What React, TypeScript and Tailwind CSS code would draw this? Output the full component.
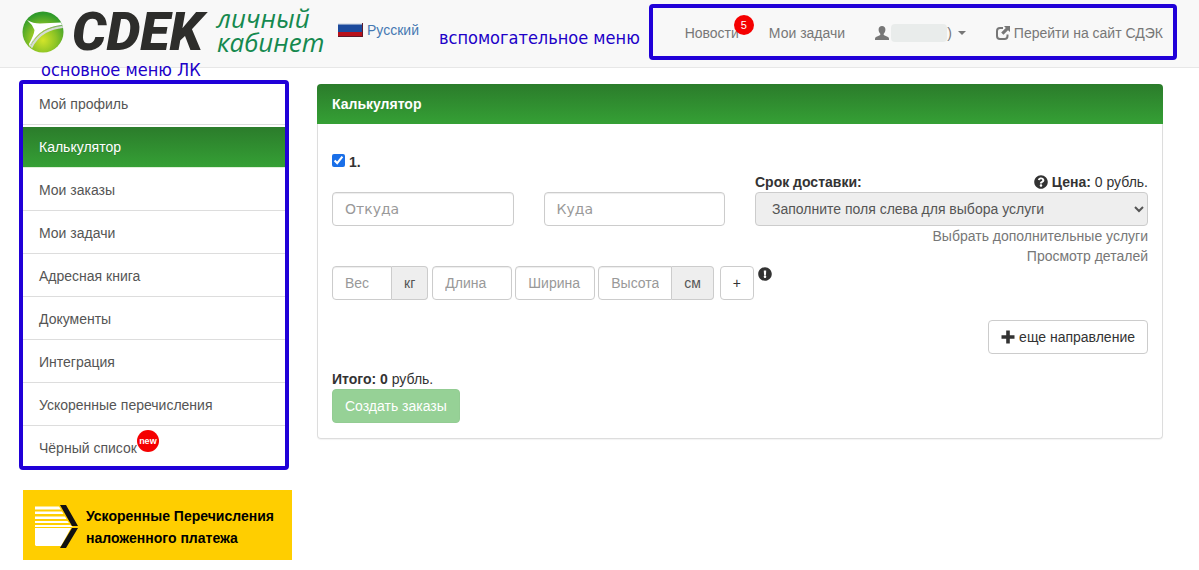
import { useState } from 'react'
import { FaExclamationCircle, FaQuestionCircle } from 'react-icons/fa'

const menuItems = [
  { label: 'Мой профиль' },
  { label: 'Калькулятор', active: true },
  { label: 'Мои заказы' },
  { label: 'Мои задачи' },
  { label: 'Адресная книга' },
  { label: 'Документы' },
  { label: 'Интеграция' },
  { label: 'Ускоренные перечисления' },
  { label: 'Чёрный список', badge: 'new' },
]

const field =
  'h-[34px] min-w-0 border border-[#ccc] bg-white px-3 text-[#555] placeholder:text-[#999] shadow-[inset_0_1px_1px_rgba(0,0,0,0.075)] outline-none focus:border-[#66afe9]'
const addon =
  'flex h-[34px] items-center rounded-r border border-l-0 border-[#ccc] bg-[#eee] px-3 text-[#555]'
const button = 'h-[34px] rounded border border-[#ccc] bg-white px-3 text-[#333]'
const note = "font-['DejaVu_Sans_Condensed','DejaVu_Sans',sans-serif] font-stretch-condensed text-lg leading-5 text-[#2000c8]"

function GlobeLogo() {
  return (
    <svg viewBox="0 0 42 42" className="size-[42px]" aria-hidden="true">
      <defs>
        <radialGradient id="globe" cx="0.5" cy="0.7" r="0.65">
          <stop offset="0" stopColor="#d3e52a" />
          <stop offset="0.5" stopColor="#8dc425" />
          <stop offset="1" stopColor="#2f9a2b" />
        </radialGradient>
      </defs>
      <circle cx="21" cy="21" r="20.5" fill="url(#globe)" />
      <path d="M5 9 Q11 12.500 18 12.500 L39 11.500 L40 14 Q29 15 21.500 19.500 Q13 25 8 36 L7 33 Q12 24 12.500 19 Q10 13 5 9Z" fill="#fff" />
      <path d="M8.500 35.500 Q14 25 22.500 20.200 Q30 16 40.500 14.800 L41 17 Q31 18 24 22 Q15 27 10 37.500Z" fill="#d5dbd5" />
      <path d="M8 34.500 Q13.500 24.500 22 19.800 Q29 15.800 40 14.600" fill="none" stroke="#8fae86" strokeWidth="0.6" />
    </svg>
  )
}

function Flag() {
  return (
    <svg viewBox="0 0 25 14" className="h-3.5 w-[25px]" aria-hidden="true">
      <rect width="25" height="9" fill="#1c4a9c" />
      <rect width="25" height="1.5" fill="#dfe4ea" />
      <rect y="9" width="25" height="5" fill="#b8111b" />
      <path d="M0 13.5H24.5V0" fill="none" stroke="#5d1b2c" strokeWidth="1" />
    </svg>
  )
}

function UserIcon() {
  return (
    <svg viewBox="0 0 14 14" className="size-3.5" fill="currentColor" aria-hidden="true">
      <path d="M7 0C4.900 0 3.600 1.500 3.600 3.500c0 1.600.6 3 1.500 4 .4.500.3 1.500-.3 1.800L1 11C.3 11.400 0 12 0 12.800V14h14v-1.200c0-.8-.3-1.400-1-1.800L9.200 9.300c-.6-.3-.7-1.300-.3-1.800.9-1 1.500-2.400 1.500-4C10.400 1.500 9.100 0 7 0Z" />
    </svg>
  )
}

function ShareIcon() {
  return (
    <svg viewBox="0 0 14 14" className="size-3.5" aria-hidden="true">
      <path d="M7 2H4Q1 2 1 5V10Q1 13 4 13H8.500Q11.500 13 11.500 10V8.500" fill="none" stroke="currentColor" strokeWidth="2" />
      <path d="M8 0H14V6L12 4.200L7.400 8.800L5.200 6.600L9.800 2Z" fill="currentColor" />
    </svg>
  )
}

function PlusIcon() {
  return (
    <svg viewBox="0 0 14 14" className="size-3.5" fill="currentColor" aria-hidden="true">
      <path d="M5.200.5h3.600v4.700h4.700v3.600H8.800v4.700H5.200V8.800H.5V5.200h4.700Z" />
    </svg>
  )
}

function Header() {
  return (
    <header className="flex h-[68px] items-start border-b border-[#e7e7e7] bg-[#f8f8f8] px-[22px]">
      <a href="#" className="flex shrink-0 items-start">
        <span className="mt-[11px]">
          <GlobeLogo />
        </span>
        <span className="mt-1 ml-2 w-[145px] font-[Roboto,sans-serif] text-[54px] leading-[56px] font-black text-[#2d2d2b] italic">
          CDEK
        </span>
        <span className="mt-1.5 w-[121px] font-['Open_Sans',sans-serif] text-[26px] leading-6 text-[#15894f] italic">
          личный кабинет
        </span>
      </a>
      <a href="#" className="mt-5 flex shrink-0 items-center gap-1 leading-5 text-[#4679b2]">
        <Flag />
        Русский
      </a>
      <span className={`${note} mt-7 ml-5 shrink-0`}>вспомогательное меню</span>
      <nav className="mt-1 ml-auto flex h-14 shrink-0 items-center gap-[30px] rounded border-4 border-[#2000d8] pt-0.5 pr-2.5 pl-8 text-[#777]">
        <a href="#" className="relative">
          Новости
          <span className="absolute -top-2 -right-[15px] flex size-5 items-center justify-center rounded-full bg-[#f50000] text-[11px] text-white">
            5
          </span>
        </a>
        <a href="#">Мои задачи</a>
        <button className="flex items-center" aria-label="Профиль">
          <UserIcon />
          <span className="ml-0.5 h-[18px] w-14 rounded-sm bg-[#e9eceb]" />
          <span>)</span>
          <span className="ml-1.5 border-x-4 border-t-4 border-x-transparent border-t-[#777]" />
        </button>
        <a href="#" className="flex items-center gap-1">
          <ShareIcon />
          Перейти на сайт СДЭК
        </a>
      </nav>
    </header>
  )
}

function Sidebar() {
  return (
    <aside className="w-[273px] shrink-0">
      <nav className="relative mr-[3px] rounded border-4 border-[#2000d8]">
        <span className={`${note} absolute -top-6 left-[18px] whitespace-nowrap`}>
          основное меню ЛК
        </span>
        <ul className="flex flex-col gap-0.5">
          {menuItems.map(({ label, active, badge }) => (
            <li key={label}>
              <a
                href="#"
                className={
                  active
                    ? 'block border-b border-[#dff0d8] bg-linear-to-b from-[#2b7c2b] to-[#35a035] px-4 py-2.5 leading-5 text-white text-shadow-2xs'
                    : badge
                      ? 'block px-4 pt-2.5 pb-2 leading-5 text-[#555]'
                      : 'block border-b border-[#ddd] px-4 py-2.5 leading-5 text-[#555]'
                }
              >
                <span className="relative">
                  {label}
                  {badge && (
                    <span className="absolute -top-2.5 left-full flex size-[22px] items-center justify-center rounded-full bg-[#f50000] text-[9px] font-bold text-white">
                      {badge}
                    </span>
                  )}
                </span>
              </a>
            </li>
          ))}
        </ul>
      </nav>
      <a
        href="#"
        className="mt-5 ml-1 flex h-[70px] items-center gap-2 bg-[#ffce00] pt-1 pl-3 leading-[22px] font-bold text-black"
      >
        <svg viewBox="0 0 43 44" className="h-11 w-[43px] shrink-0" aria-hidden="true">
          <path d="M0 1.500H24L26 4.500H0ZM0 6.500H27L28.500 9H0ZM0 11.500H30L31.500 14H0ZM0 16H32.500L34 18H0ZM0 20H35L38 22H0Z" fill="#fff" />
          <path d="M0 23H36L26 41H1L0 40Z" fill="#fff" />
          <path d="M25 0H31L43 21H37ZM43 23H37L25 43H31Z" fill="#111" />
        </svg>
        <span>
          Ускоренные Перечисления
          <br />
          наложенного платежа
        </span>
      </a>
    </aside>
  )
}

function Calculator() {
  const [checked, setChecked] = useState(true)

  return (
    <section className="mt-1 min-w-0 flex-1">
      <h1 className="rounded-t bg-linear-to-b from-[#2b7c2b] to-[#35a035] px-[15px] py-2.5 leading-5 font-bold text-white">
        Калькулятор
      </h1>
      <form className="rounded-b border border-t-0 border-[#ddd] px-3.5 pt-7 pb-[15px] shadow-[0_1px_1px_rgba(0,0,0,0.05)]">
        <label className="flex h-5 items-center gap-1 font-bold">
          <input
            type="checkbox"
            checked={checked}
            onChange={(e) => setChecked(e.target.checked)}
            className="mb-1 size-[13px] accent-[#1a6fe8]"
          />
          1.
        </label>

        <div className="grid grid-cols-4 items-start gap-x-[30px]">
          <input
            aria-label="Откуда"
            placeholder="Откуда"
            className={`${field} mt-5 w-full rounded font-['DejaVu_Sans',sans-serif]`}
          />
          <input
            aria-label="Куда"
            placeholder="Куда"
            className={`${field} mt-5 w-full rounded font-['DejaVu_Sans',sans-serif]`}
          />
          <div className="col-span-2">
            <div className="flex justify-between">
              <label htmlFor="service" className="font-bold">
                Срок доставки:
              </label>
              <span className="flex items-center gap-1">
                <FaQuestionCircle className="size-3.5" />
                <span>
                  <b>Цена:</b> 0 рубль.
                </span>
              </span>
            </div>
            <select
              id="service"
              disabled
              className="block h-[34px] w-full rounded border border-[#ccc] bg-[#eee] px-3 text-[#555] opacity-100"
            >
              <option>Заполните поля слева для выбора услуги</option>
            </select>
            <div className="flex flex-col items-end text-[#777]">
              <a href="#">Выбрать дополнительные услуги</a>
              <a href="#">Просмотр деталей</a>
            </div>
          </div>
        </div>

        <div className="flex items-start">
          <input aria-label="Вес" placeholder="Вес" className={`${field} w-[60px] rounded-l`} />
          <span className={addon}>кг</span>
          <input aria-label="Длина" placeholder="Длина" className={`${field} ml-1 w-20 rounded`} />
          <input aria-label="Ширина" placeholder="Ширина" className={`${field} ml-[3px] w-20 rounded`} />
          <input aria-label="Высота" placeholder="Высота" className={`${field} ml-[3px] w-[74px] rounded-l`} />
          <span className={addon}>см</span>
          <button type="button" className={`${button} ml-1.5`}>
            +
          </button>
          <FaExclamationCircle className="mt-px ml-1 size-3.5" />
        </div>

        <div className="mt-5 flex justify-end">
          <button type="button" className={`${button} flex items-center gap-1`}>
            <PlusIcon />
            еще направление
          </button>
        </div>

        <p className="mt-[15px]">
          <b>Итого: 0</b> рубль.
        </p>
        <button
          type="submit"
          disabled
          className="h-[34px] rounded border border-[#93cc93] bg-[#96d196] px-3 text-white"
        >
          Создать заказы
        </button>
      </form>
    </section>
  )
}

export default function App() {
  return (
    <div className="min-h-screen bg-white font-['Liberation_Sans',Arial,sans-serif] text-sm leading-5 text-[#333]">
      <Header />
      <main className="flex items-start gap-[25px] pt-3 pr-9 pl-[19px]">
        <Sidebar />
        <Calculator />
      </main>
    </div>
  )
}
